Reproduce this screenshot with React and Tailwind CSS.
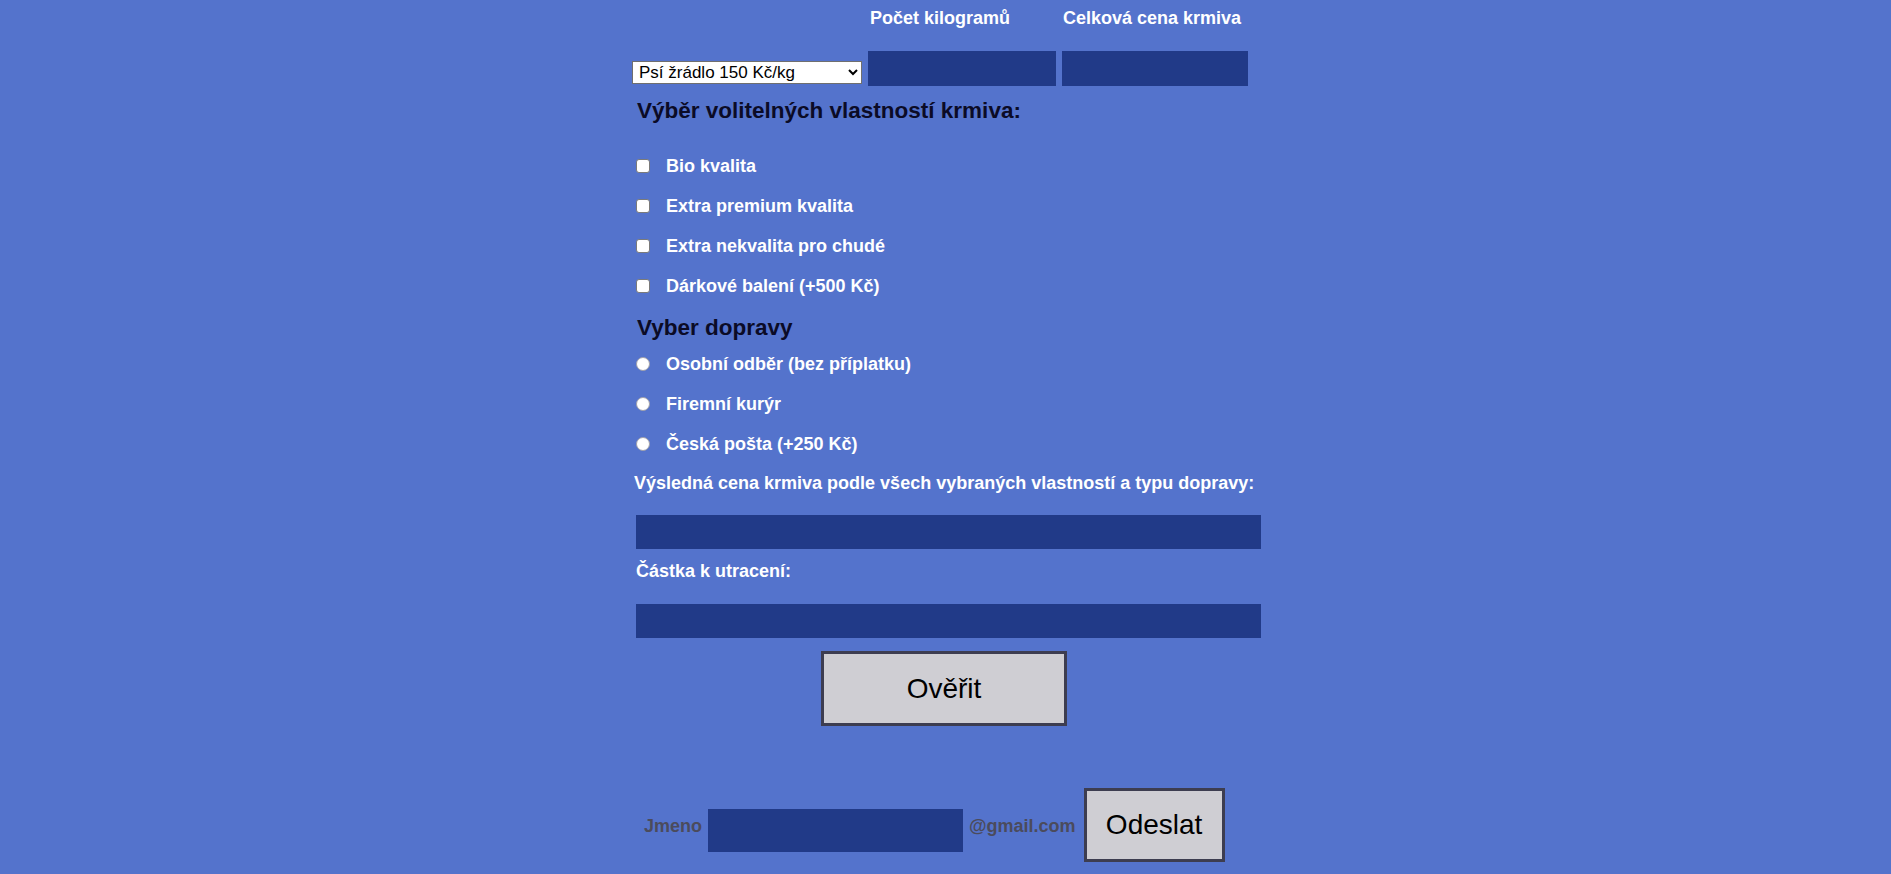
export default function App() {
  const checks = [
    "Bio kvalita",
    "Extra premium kvalita",
    "Extra nekvalita pro chudé",
    "Dárkové balení (+500 Kč)",
  ];
  const radios = ["Osobní odběr (bez příplatku)", "Firemní kurýr", "Česká pošta (+250 Kč)"];

  return (
    <div className="min-h-screen bg-[#5473cc] font-['Liberation_Sans',Arial,sans-serif] font-bold text-[18px] text-white">
      <div className="mx-auto w-[627px] pt-[7px]">
        {/* top row */}
        <div className="grid grid-cols-[230px_188px_186px] gap-x-[6px] gap-y-[22px]">
          <div />
          <div className="ml-[2px] leading-[22px]">Počet kilogramů</div>
          <div className="ml-[1px] leading-[22px]">Celková cena krmiva</div>

          <select className="self-end mb-[2px] h-[23px] w-[230px] bg-white border border-[#6f6f6f] text-black font-normal text-[17px] leading-[20px] pl-[2px]">
            <option>Psí žrádlo 150 Kč/kg</option>
            <option>Kočičí žrádlo 120 Kč/kg</option>
          </select>
          <input type="text" className="h-[35px] w-[188px] bg-[#213a88] outline-none" />
          <input type="text" className="h-[35px] w-[186px] bg-[#213a88] outline-none" />
        </div>

        <h2 className="mt-[12px] ml-[5px] text-[22.5px] leading-[26px] text-[#0b0b26]">
          Výběr volitelných vlastností krmiva:
        </h2>

        <div className="mt-[22px] flex flex-col">
          {checks.map((c) => (
            <label key={c} className="h-[40px] flex items-center">
              <input
                type="checkbox"
                className="appearance-none ml-[4px] w-[14px] h-[14px] bg-white border border-[#7a7a7a] rounded-[3px]"
              />
              <span className="ml-[16px] leading-[22px]">{c}</span>
            </label>
          ))}
        </div>

        <h2 className="mt-[9px] ml-[5px] text-[22.5px] leading-[26px] text-[#0b0b26]">Vyber dopravy</h2>

        <div className="mt-[3px] flex flex-col">
          {radios.map((r) => (
            <label key={r} className="h-[40px] flex items-center">
              <input
                type="radio"
                name="doprava"
                className="appearance-none ml-[4px] w-[14px] h-[14px] bg-white border border-[#a0a0aa] rounded-full"
              />
              <span className="ml-[16px] leading-[22px]">{r}</span>
            </label>
          ))}
        </div>

        <div className="mt-[8px] ml-[2px] leading-[22px]">
          Výsledná cena krmiva podle všech vybraných vlastností a typu dopravy:
        </div>
        <input type="text" className="block mt-[21px] ml-[4px] w-[625px] h-[34px] bg-[#213a88] outline-none" />

        <div className="mt-[11px] ml-[4px] leading-[22px]">Částka k utracení:</div>
        <input type="text" className="block mt-[22px] ml-[4px] w-[625px] h-[34px] bg-[#213a88] outline-none" />

        <button className="block mt-[13px] ml-[189px] w-[246px] h-[75px] bg-[#cfced3] border-[3px] border-[#3d3d50] text-black font-normal text-[28px]">
          Ověřit
        </button>

        <div className="mt-[62px] ml-[12px] flex items-start">
          <span className="mt-[27px] leading-[22px] text-[#4b4b5c]">Jmeno</span>
          <input type="text" className="mt-[21px] ml-[6px] w-[255px] h-[43px] bg-[#213a88] outline-none" />
          <span className="mt-[27px] ml-[6px] leading-[22px] text-[#4b4b5c]">@gmail.com</span>
          <button className="ml-[8px] w-[141px] h-[74px] bg-[#cfced3] border-[3px] border-[#3d3d50] text-black font-normal text-[28px]">
            Odeslat
          </button>
        </div>
      </div>
    </div>
  );
}
